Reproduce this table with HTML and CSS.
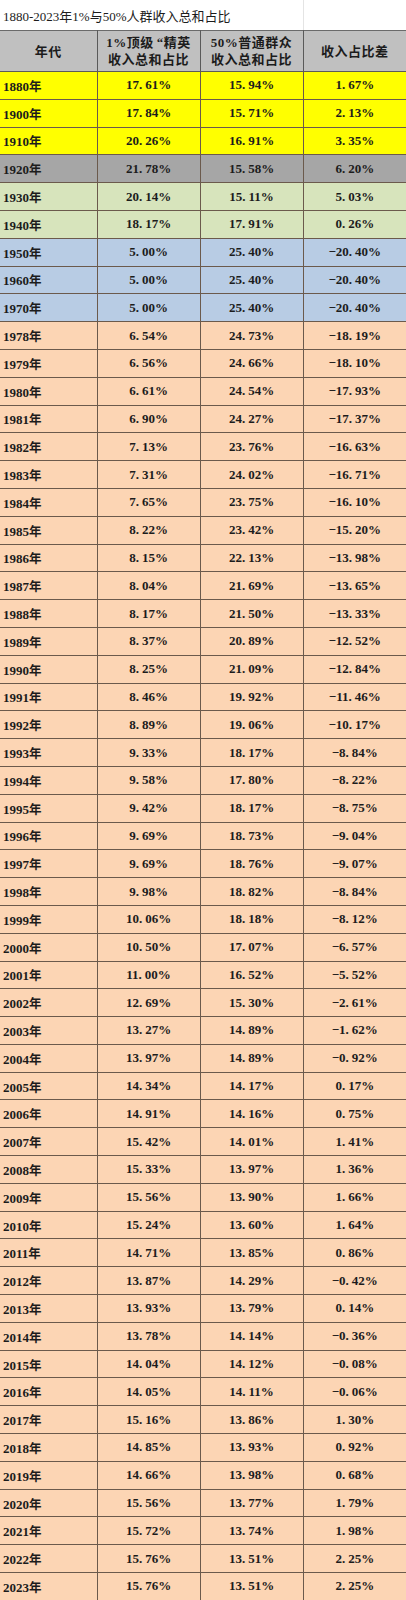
FILE: index.html
```html
<!doctype html>
<html>
  <head>
    <meta charset="utf-8">
    <title>1880-2023年1%与50%人群收入总和占比</title>
    <link rel="stylesheet" href="styles.css">
  </head>
  <body>
    <div id="sheet">
      <div class="title">
        <span>1880-2023年1%与50%人群收入总和占比</span>
        <span class="gridline"></span>
      </div>
      <table id="income">
        <colgroup>
          <col class="c-year">
          <col class="c-num">
          <col class="c-num">
          <col class="c-num">
        </colgroup>
        <thead>
          <tr>
            <th>年代</th>
            <th>1%顶级<span class="gap"></span>“精英<br>收入总和占比</th>
            <th>50%普通群众<br>收入总和占比</th>
            <th>收入占比差</th>
          </tr>
        </thead>
        <tbody id="rows"></tbody>
      </table>
    </div>
    <script>
      // year, top 1%, bottom 50%, diff, colour group
      var data = [
        ['1880', '17.61', '15.94', '1.67', 'yellow'],
        ['1900', '17.84', '15.71', '2.13', 'yellow'],
        ['1910', '20.26', '16.91', '3.35', 'yellow'],
        ['1920', '21.78', '15.58', '6.20', 'gray'],
        ['1930', '20.14', '15.11', '5.03', 'green'],
        ['1940', '18.17', '17.91', '0.26', 'green'],
        ['1950', '5.00', '25.40', '-20.40', 'blue'],
        ['1960', '5.00', '25.40', '-20.40', 'blue'],
        ['1970', '5.00', '25.40', '-20.40', 'blue'],
        ['1978', '6.54', '24.73', '-18.19'],
        ['1979', '6.56', '24.66', '-18.10'],
        ['1980', '6.61', '24.54', '-17.93'],
        ['1981', '6.90', '24.27', '-17.37'],
        ['1982', '7.13', '23.76', '-16.63'],
        ['1983', '7.31', '24.02', '-16.71'],
        ['1984', '7.65', '23.75', '-16.10'],
        ['1985', '8.22', '23.42', '-15.20'],
        ['1986', '8.15', '22.13', '-13.98'],
        ['1987', '8.04', '21.69', '-13.65'],
        ['1988', '8.17', '21.50', '-13.33'],
        ['1989', '8.37', '20.89', '-12.52'],
        ['1990', '8.25', '21.09', '-12.84'],
        ['1991', '8.46', '19.92', '-11.46'],
        ['1992', '8.89', '19.06', '-10.17'],
        ['1993', '9.33', '18.17', '-8.84'],
        ['1994', '9.58', '17.80', '-8.22'],
        ['1995', '9.42', '18.17', '-8.75'],
        ['1996', '9.69', '18.73', '-9.04'],
        ['1997', '9.69', '18.76', '-9.07'],
        ['1998', '9.98', '18.82', '-8.84'],
        ['1999', '10.06', '18.18', '-8.12'],
        ['2000', '10.50', '17.07', '-6.57'],
        ['2001', '11.00', '16.52', '-5.52'],
        ['2002', '12.69', '15.30', '-2.61'],
        ['2003', '13.27', '14.89', '-1.62'],
        ['2004', '13.97', '14.89', '-0.92'],
        ['2005', '14.34', '14.17', '0.17'],
        ['2006', '14.91', '14.16', '0.75'],
        ['2007', '15.42', '14.01', '1.41'],
        ['2008', '15.33', '13.97', '1.36'],
        ['2009', '15.56', '13.90', '1.66'],
        ['2010', '15.24', '13.60', '1.64'],
        ['2011', '14.71', '13.85', '0.86'],
        ['2012', '13.87', '14.29', '-0.42'],
        ['2013', '13.93', '13.79', '0.14'],
        ['2014', '13.78', '14.14', '-0.36'],
        ['2015', '14.04', '14.12', '-0.08'],
        ['2016', '14.05', '14.11', '-0.06'],
        ['2017', '15.16', '13.86', '1.30'],
        ['2018', '14.85', '13.93', '0.92'],
        ['2019', '14.66', '13.98', '0.68'],
        ['2020', '15.56', '13.77', '1.79'],
        ['2021', '15.72', '13.74', '1.98'],
        ['2022', '15.76', '13.51', '2.25'],
        ['2023', '15.76', '13.51', '2.25']
      ];

      var pct = function(v) {
        // the sheet font draws a long minus and a wide gap after the point
        return v.replace('-', '−').replace('.', '.<span class="gap"></span>') + '%';
      };

      var html = '';
      for (var i = 0; i < data.length; i++) {
        var r = data[i];
        html += '<tr class="' + (r[4] || 'peach') + '">' +
          '<td class="year">' + r[0] + '<span class="cjk">年</span></td>' +
          '<td>' + pct(r[1]) + '</td>' +
          '<td>' + pct(r[2]) + '</td>' +
          '<td>' + pct(r[3]) + '</td></tr>';
      }
      document.getElementById('rows').innerHTML = html;
    </script>
  </body>
</html>
```

FILE: styles.css
```css
* {
  margin: 0;
  padding: 0;
  box-sizing: border-box;
}

body {
  background: #fff;
  color: #1c1c1c;
  font-family: "Liberation Serif", "Noto Sans CJK SC", serif;
}

div#sheet {
  width: 406px;
}

div.title {
  display: flex;
  align-items: center;
  height: 30px;
  padding-left: 3px;
  font-size: 13px;
  position: relative;
}

div.title span.gridline {
  position: absolute;
  left: 303px;
  top: 0;
  bottom: 0;
  border-left: 1px solid #e4e4e4;
}

table#income {
  width: 406px;
  border-collapse: collapse;
  table-layout: fixed;
}

col.c-year {
  width: 97px;
}

col.c-num {
  width: 103px;
}

table#income th {
  background: #c0c0c0;
  height: 41px;
  font-size: 13px;
  font-weight: bold;
  letter-spacing: 0.5px;
  line-height: 17px;
  text-align: center;
  border: 1px solid #5a5a5a;
  border-top-color: #6a6a6a;
}

table#income td {
  height: 27.8px;
  font-size: 13px;
  font-weight: bold;
  text-align: center;
  border: 1px solid #6b5a4c;
  padding: 0;
}

table#income td.year {
  text-align: left;
  padding-left: 3px;
}

table#income th:first-child,
table#income td:first-child {
  border-left: none;
}

table#income th:last-child,
table#income td:last-child {
  border-right: none;
}

span.gap {
  display: inline-block;
  width: 3px;
}

span.cjk {
  font-size: 12.5px;
}

tr.yellow td {
  background: #ffff00;
  border-color: #5f5f3c;
}

tr.gray td {
  background: #a6a6a6;
  border-color: #555;
}

tr.green td {
  background: #d7e4bc;
  border-color: #5d6150;
}

tr.blue td {
  background: #b8cce4;
  border-color: #4f5866;
}

tr.peach td {
  background: #fcd5b4;
}
```
